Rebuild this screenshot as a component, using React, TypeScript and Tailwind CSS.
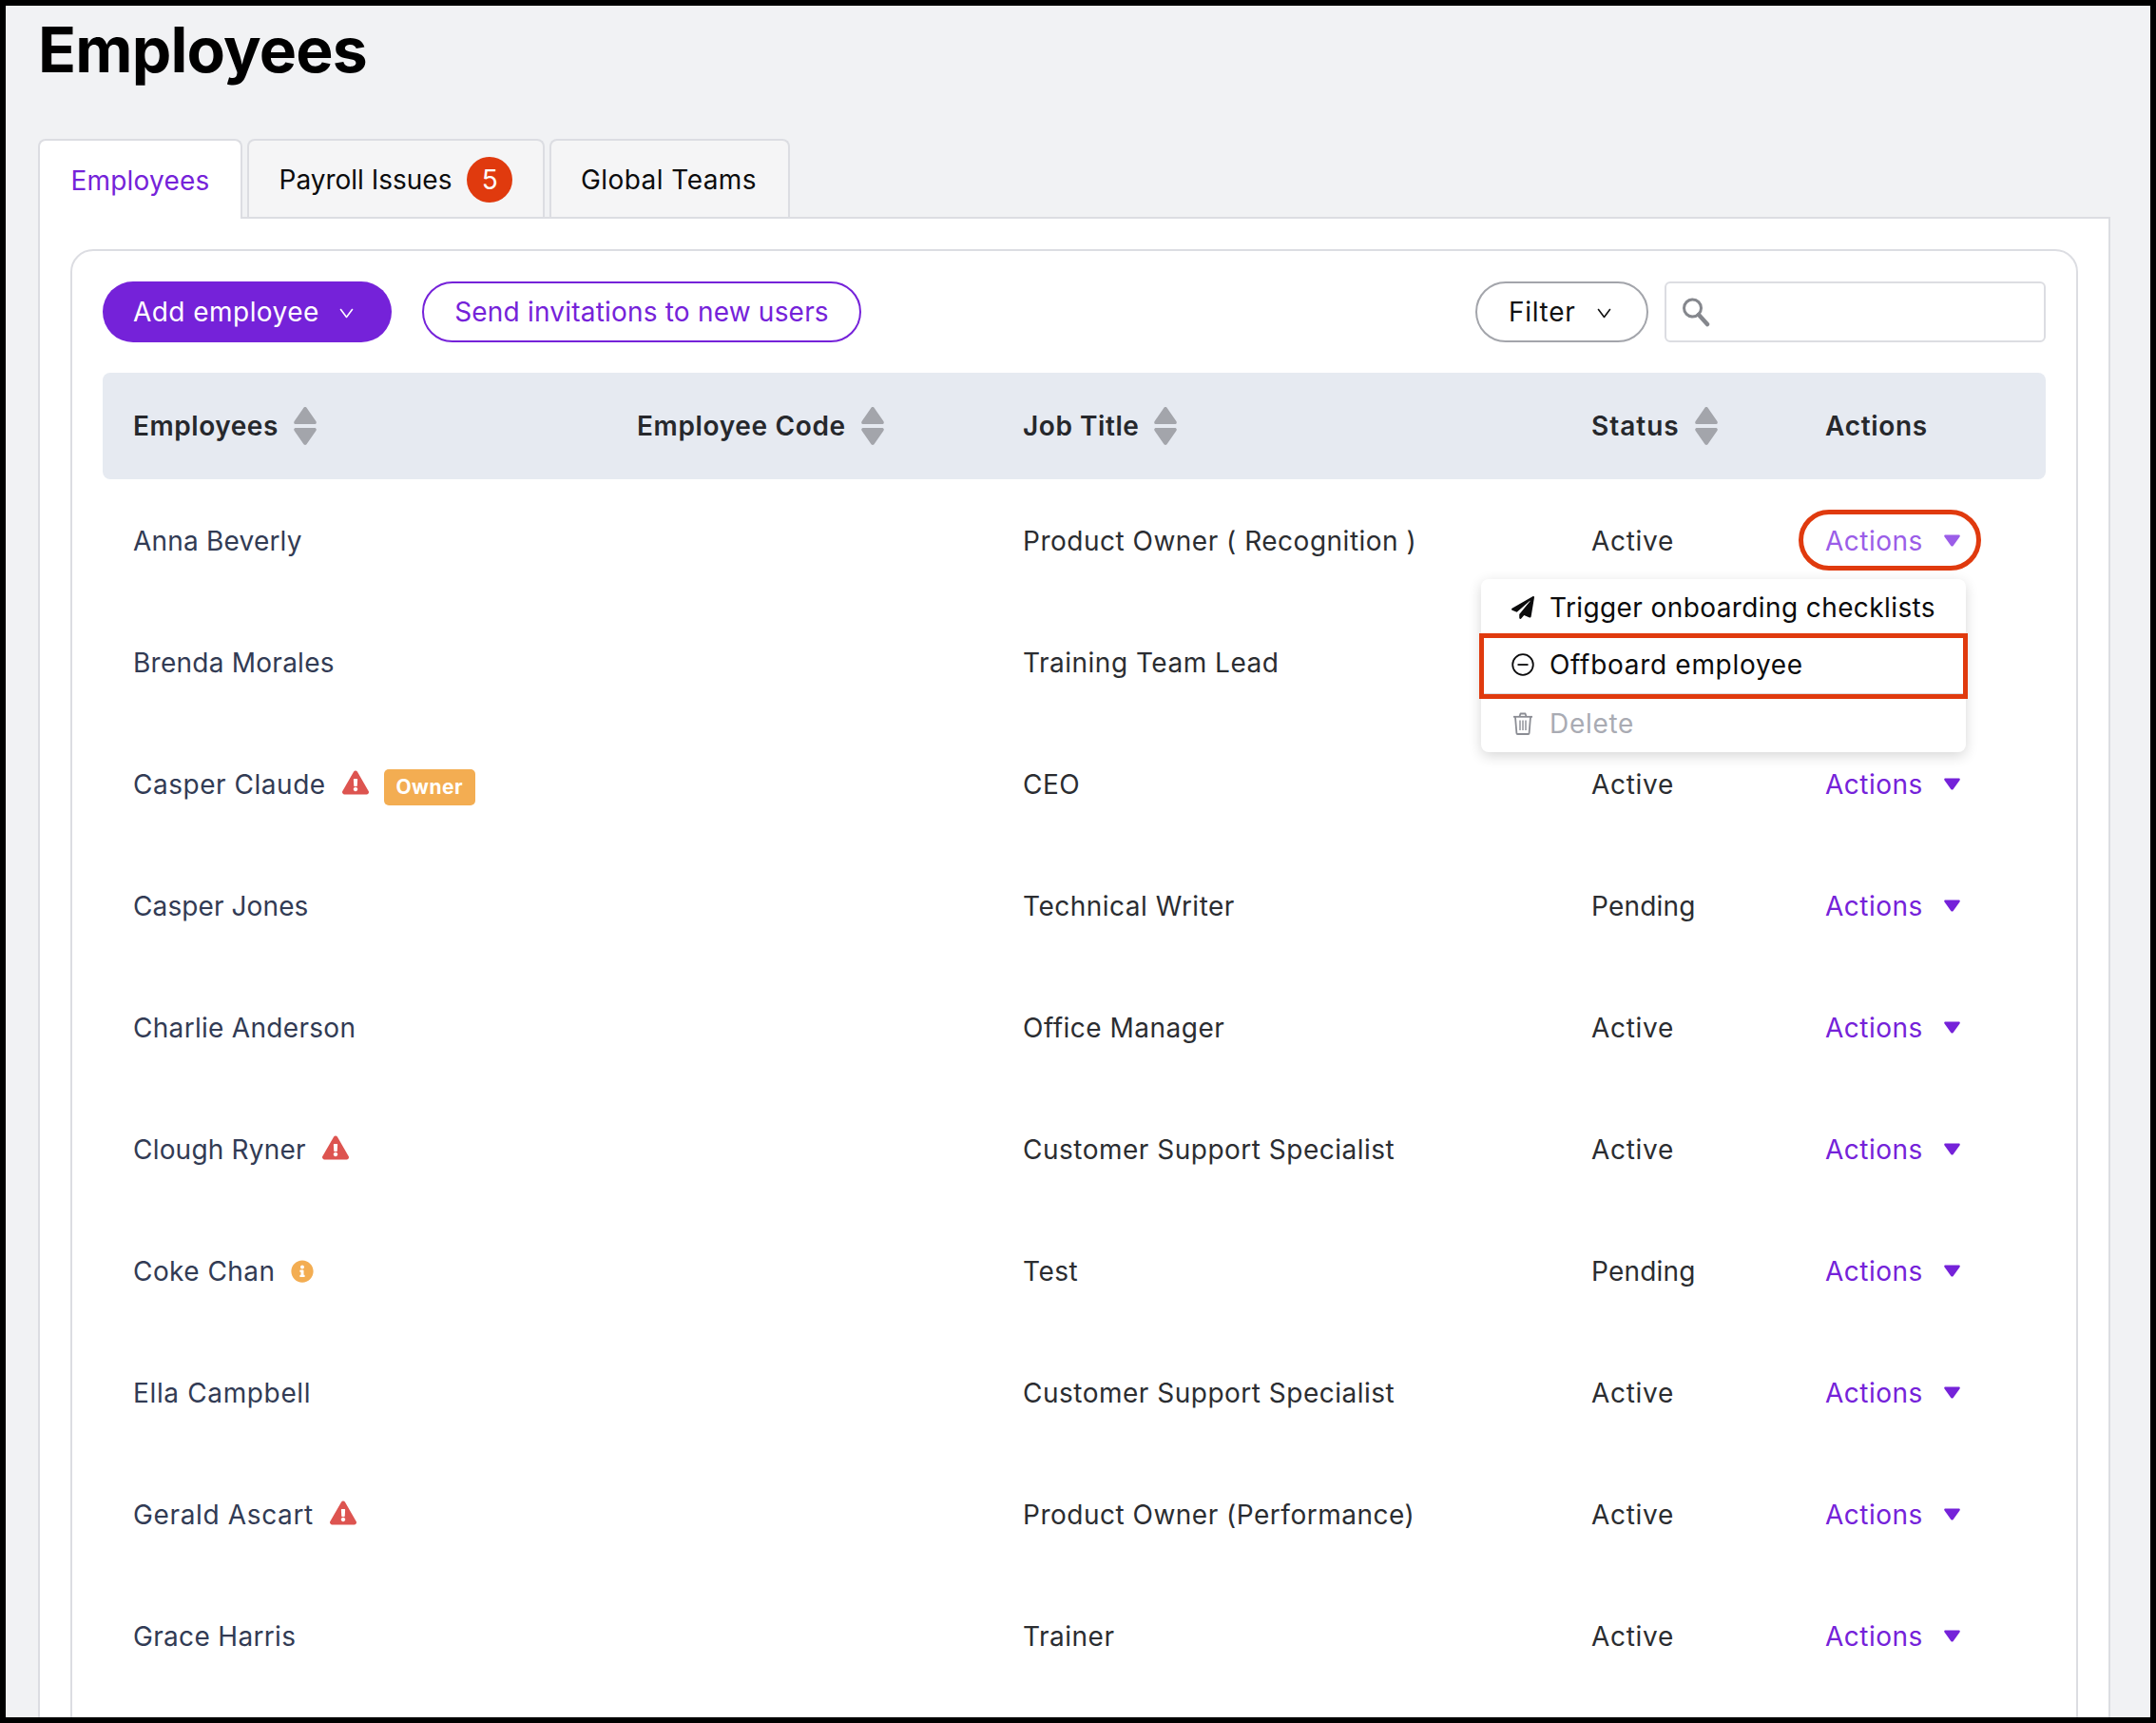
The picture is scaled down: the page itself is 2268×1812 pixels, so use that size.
import React from "react";
import { FaPaperPlane, FaExclamationTriangle, FaInfoCircle } from "react-icons/fa";

const Chevron = ({ className }: { className: string }) => (
  <svg viewBox="0 0 15 11" className={className} fill="none" stroke="currentColor" strokeWidth="1.6" strokeLinecap="round" strokeLinejoin="round">
    <path d="M1.5 1.5 L7.5 9.5 L13.5 1.5" />
  </svg>
);

const Sort = () => (
  <svg viewBox="0 0 24 42" className="w-6 h-[42px] shrink-0" fill="#a3a5ab">
    <path d="M12 1 C13 1 13.6 1.6 14 2.4 L23.4 16 C24.4 18 23.4 19 21.5 19 H2.5 C0.6 19 -0.4 18 0.6 16 L10 2.4 C10.4 1.6 11 1 12 1 Z" />
    <path d="M12 41 C13 41 13.6 40.4 14 39.6 L23.4 26 C24.4 24 23.4 23 21.5 23 H2.5 C0.6 23 -0.4 24 0.6 26 L10 39.6 C10.4 40.4 11 41 12 41 Z" />
  </svg>
);

const Caret = ({ className }: { className: string }) => (
  <svg viewBox="0 0 17 13" className={className} fill="currentColor">
    <path d="M1.6 0.5 H15.4 C16.6 0.5 17.2 1.6 16.5 2.6 L9.7 12 C9 12.8 8 12.8 7.3 12 L0.5 2.6 C-0.2 1.6 0.4 0.5 1.6 0.5 Z" />
  </svg>
);

const Warn = () => <FaExclamationTriangle className="w-[28px] h-[26px] text-[#dd5450] shrink-0 -mt-[4px]" />;

type Row = { name: string; job: string; status: string; track: string; warn?: boolean; owner?: boolean; info?: boolean };

const rows: Row[] = [
  { name: "Anna Beverly", job: "Product Owner ( Recognition )", status: "Active", track: "tracking-[0.2px]" },
  { name: "Brenda Morales", job: "Training Team Lead", status: "Active", track: "tracking-[0.25px]" },
  { name: "Casper Claude", job: "CEO", status: "Active", track: "tracking-[0.53px]", warn: true, owner: true },
  { name: "Casper Jones", job: "Technical Writer", status: "Pending", track: "tracking-[0.1px]" },
  { name: "Charlie Anderson", job: "Office Manager", status: "Active", track: "tracking-[0.3px]" },
  { name: "Clough Ryner", job: "Customer Support Specialist", status: "Active", track: "tracking-[0.2px]", warn: true },
  { name: "Coke Chan", job: "Test", status: "Pending", track: "tracking-[0.44px]", info: true },
  { name: "Ella Campbell", job: "Customer Support Specialist", status: "Active", track: "tracking-[0.64px]" },
  { name: "Gerald Ascart", job: "Product Owner (Performance)", status: "Active", track: "tracking-[0.64px]", warn: true },
  { name: "Grace Harris", job: "Trainer", status: "Active", track: "tracking-[0.32px]" },
];

const Menu = () => (
  <div className="absolute left-[-362px] top-[54px] z-10 w-[510px] h-[182px] bg-white rounded-lg shadow-[0_4px_14px_rgba(0,0,0,0.16)] flex flex-col text-[#0b0b0c]">
    <div className="h-[60px] flex items-center pl-[32px] gap-[16px] tracking-[0.4px]">
      <FaPaperPlane className="w-[24px] h-[24px]" />
      <span>Trigger onboarding checklists</span>
    </div>
    <div className="h-[62px] flex items-center pl-[32px] gap-[16px] tracking-[0.7px] border-b-2 border-[#d9dade]">
      <svg viewBox="0 0 24 24" className="w-[24px] h-[24px]" fill="none" stroke="currentColor" strokeWidth="1.8">
        <circle cx="12" cy="12" r="10.8" />
        <path d="M6.5 12 H17.5" />
      </svg>
      <span>Offboard employee</span>
    </div>
    <div className="flex-1 flex items-center pl-[32px] gap-[16px] tracking-[0.7px] text-[#a9abb3]">
      <svg viewBox="0 0 24 24" className="w-[24px] h-[24px] text-[#8b8d94]" fill="none" stroke="currentColor" strokeWidth="1.8" strokeLinejoin="round">
        <path d="M2 4.8 H22" />
        <path d="M8.5 4.5 L9.5 1.5 H14.5 L15.5 4.5" />
        <path d="M4 5 L5.4 22 C5.4 22.6 6 23 6.5 23 H17.5 C18 23 18.6 22.6 18.6 22 L20 5" />
        <path d="M9 8.5 V19 M12 8.5 V19 M15 8.5 V19" strokeWidth="1.4" />
      </svg>
      <span>Delete</span>
    </div>
    <div className="absolute left-[-2px] right-[-2px] top-[57px] h-[69px] border-[5px] border-[#e03a0e]" />
  </div>
);

export default function App() {
  return (
    <div className="w-[2268px] h-[1812px] overflow-hidden border-[6px] border-black bg-[#f1f2f4] font-['Inter',sans-serif] text-[28px] leading-none tracking-[0.2px]">
      <div className="pl-[34px] pr-[42px]">
        <h1 className="h-[140px] pt-[16px] text-[66px] leading-[60px] font-bold text-black tracking-[-0.8px]">Employees</h1>

        <div className="flex gap-[5px] h-[84px] relative z-[1] text-[#0b0b0c]">
          <div className="w-[215px] h-[84px] pt-[2px] bg-white border-2 border-b-0 border-[#dcdde2] rounded-t-lg flex items-center justify-center text-[#7522d9]">Employees</div>
          <div className="w-[313px] h-[82px] pt-[1px] bg-[#f5f5f6] border-2 border-b-0 border-[#dcdde2] rounded-t-lg flex items-center justify-center gap-[16px]">
            <span className="tracking-[0px]">Payroll Issues</span>
            <span className="w-[48px] h-[48px] rounded-full bg-[#e03a0e] text-white flex items-center justify-center">5</span>
          </div>
          <div className="w-[253px] h-[82px] pt-[1px] pr-[2px] bg-[#f5f5f6] border-2 border-b-0 border-[#dcdde2] rounded-t-lg flex items-center justify-center tracking-[0.45px]">Global Teams</div>
        </div>

        <div className="bg-white border-2 border-[#dcdde2] -mt-[2px] px-[32px] pt-[32px] h-[1600px]">
          <div className="bg-white border-2 border-[#dcdde2] rounded-[24px] px-[32px] pt-[32px] h-[1600px]">
            <div className="flex items-center h-[64px]">
              <button className="w-[304px] h-[64px] rounded-full bg-[#7522d9] text-white flex items-center pl-[32px] gap-[21px] tracking-[0.45px]">
                <span>Add employee</span>
                <Chevron className="w-[15px] h-[11px] mt-[2px]" />
              </button>
              <button className="ml-[32px] w-[462px] h-[64px] rounded-full border-2 border-[#7522d9] text-[#7522d9] bg-white">Send invitations to new users</button>
              <button className="ml-auto w-[182px] h-[64px] rounded-full border-2 border-[#a3a5ab] bg-white text-[#111] flex items-center pl-[33px] gap-[23px] tracking-[0.7px]">
                <span>Filter</span>
                <Chevron className="w-[15px] h-[11px] mt-[2px]" />
              </button>
              <div className="ml-[17px] w-[401px] h-[64px] rounded-md border-2 border-[#dcdde2] bg-white flex items-center pl-[16px]">
                <svg viewBox="0 0 30 32" className="w-[30px] h-[32px]" fill="none" stroke="#85878d">
                  <circle cx="11.5" cy="12" r="9" strokeWidth="3" />
                  <path d="M18 19 L27 29" strokeWidth="4.5" strokeLinecap="round" />
                </svg>
              </div>
            </div>

            <div className="mt-[32px] h-[112px] bg-[#e6eaf1] rounded-lg pl-[32px] grid grid-cols-[530px_406px_598px_246px_1fr] items-center font-semibold text-[#26282c] tracking-[0.55px]">
              <div className="flex items-center gap-[16px]"><span>Employees</span><Sort /></div>
              <div className="flex items-center gap-[16px]"><span className="tracking-[0.65px]">Employee Code</span><Sort /></div>
              <div className="flex items-center gap-[16px]"><span>Job Title</span><Sort /></div>
              <div className="flex items-center gap-[16px]"><span className="tracking-[1px]">Status</span><Sort /></div>
              <div className="tracking-[0.7px]">Actions</div>
            </div>

            {rows.map((r, i) => (
              <div key={r.name} className="h-[128px] pt-[1px] pl-[32px] grid grid-cols-[530px_406px_598px_246px_1fr] items-center text-[#2b2d31]">
                <div className={`flex items-center text-[#323b54] ${r.track}`}>
                  <span>{r.name}</span>
                  {r.warn && <span className="ml-[17px]"><Warn /></span>}
                  {r.info && <FaInfoCircle className="ml-[17px] w-[24px] h-[24px] text-[#f3ad52]" />}
                  {r.owner && (
                    <span className="ml-[16px] mt-[6px] w-[96px] h-[38px] rounded-[5px] bg-[#f3ad52] text-white text-[21px] font-bold tracking-[0.5px] flex items-center justify-center">Owner</span>
                  )}
                </div>
                <div />
                <div className="tracking-[0.5px]">{r.job}</div>
                <div className={r.status === "Active" ? "tracking-[0.7px]" : "tracking-[0.2px]"}>{r.status}</div>
                <div className="relative flex items-center tracking-[0.5px]">
                  <span className={i === 0 ? "text-[#9b5de8]" : "text-[#7522d9]"}>Actions</span>
                  <Caret className={i === 0 ? "w-[17px] h-[13px] ml-[22px] text-[#9b5de8]" : "w-[17px] h-[13px] ml-[22px] text-[#7522d9]"} />
                  {i === 0 && <div className="absolute left-[-28px] top-[-19px] w-[192px] h-[64px] rounded-[32px] border-[5px] border-[#e03a0e]" />}
                  {i === 0 && <Menu />}
                </div>
              </div>
            ))}
          </div>
        </div>
      </div>
    </div>
  );
}
